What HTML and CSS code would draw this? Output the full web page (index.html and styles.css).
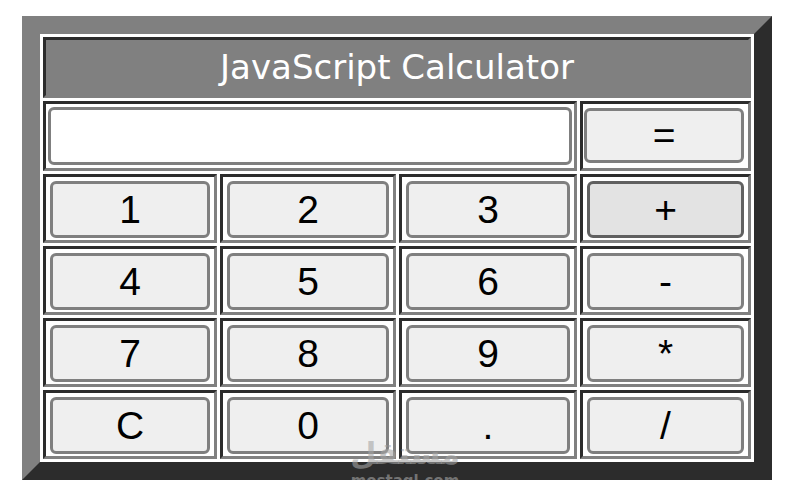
FILE: index.html
```html
<!DOCTYPE html>
<html lang="en">
<head>
    <meta charset="UTF-8">
    <meta name="viewport" content="width=device-width, initial-scale=1.0">
    <title>JavaScript Calculator</title>
    <link rel="stylesheet" href="styles.css">
</head>
<body>
    <table class="calc">
        <colgroup>
            <col class="c1">
            <col class="c2">
            <col class="c3">
            <col class="c4">
        </colgroup>
        <tr>
            <td colspan="4" class="title">JavaScript Calculator</td>
        </tr>
        <tr>
            <td colspan="3" class="screen-cell"><input type="text" id="display" class="screen" readonly></td>
            <td class="eq-cell"><button class="key">=</button></td>
        </tr>
        <tr>
            <td><button class="key">1</button></td>
            <td><button class="key">2</button></td>
            <td><button class="key">3</button></td>
            <td><button class="key hover">+</button></td>
        </tr>
        <tr>
            <td><button class="key">4</button></td>
            <td><button class="key">5</button></td>
            <td><button class="key">6</button></td>
            <td><button class="key">-</button></td>
        </tr>
        <tr>
            <td><button class="key">7</button></td>
            <td><button class="key">8</button></td>
            <td><button class="key">9</button></td>
            <td><button class="key">*</button></td>
        </tr>
        <tr>
            <td><button class="key">C</button></td>
            <td><button class="key">0</button></td>
            <td><button class="key">.</button></td>
            <td><button class="key">/</button></td>
        </tr>
    </table>
    <div class="watermark">
        <div class="wm-logo">مستقل</div>
        <div class="wm-url">mostaql.com</div>
    </div>
</body>
</html>
```
FILE: styles.css
```css
body {
    margin: 0;
    font-family: "Liberation Sans", Arial, sans-serif;
    background: #fff;
    position: relative;
}
.calc {
    margin: 16px 0 0 22px;
    width: 750px;
    border: 18px outset #808080;
    border-spacing: 3px;
    table-layout: fixed;
    background: #fff;
}
.c1 { width: 174px; }
.c2 { width: 176px; }
.c3 { width: 178px; }
.c4 { width: 171px; }
.calc td {
    border: 3px inset #808080;
    padding: 4px 4px 2px;
    text-align: center;
}
.calc td.title {
    background: #808080;
    color: #fff;
    padding: 0;
    height: 55px;
    font-family: "Comic Sans MS", "DejaVu Sans", sans-serif;
    font-size: 34px;
    line-height: 55px;
}
.calc td.screen-cell {
    padding: 3px 2px;
}
.calc td.eq-cell {
    padding: 4px 4px 5px 1px;
}
.screen {
    display: block;
    box-sizing: border-box;
    width: 100%;
    height: 58px;
    border: 3px solid #7f7f7f;
    border-radius: 6px;
    background: #fff;
    font-size: 30px;
    padding: 0 8px;
}
.key {
    display: block;
    box-sizing: border-box;
    width: 100%;
    height: 57px;
    padding: 0;
    border: 3px solid #7f7f7f;
    border-radius: 6px;
    background: #efefef;
    color: #000;
    font-family: "Liberation Sans", Arial, sans-serif;
    font-size: 39px;
    cursor: pointer;
}
.eq-cell .key {
    height: 55px;
}
.key.hover {
    background: #e3e3e3;
    border-color: #606060;
}
.watermark {
    position: absolute;
    left: 348px;
    top: 436px;
    width: 114px;
    text-align: center;
    color: rgba(165, 165, 165, 0.6);
    pointer-events: none;
}
.wm-logo {
    font-family: "DejaVu Sans", sans-serif;
    font-weight: bold;
    font-size: 30px;
    line-height: 36px;
}
.wm-url {
    font-family: "DejaVu Sans", sans-serif;
    font-weight: bold;
    font-size: 15px;
    line-height: 18px;
}
```
